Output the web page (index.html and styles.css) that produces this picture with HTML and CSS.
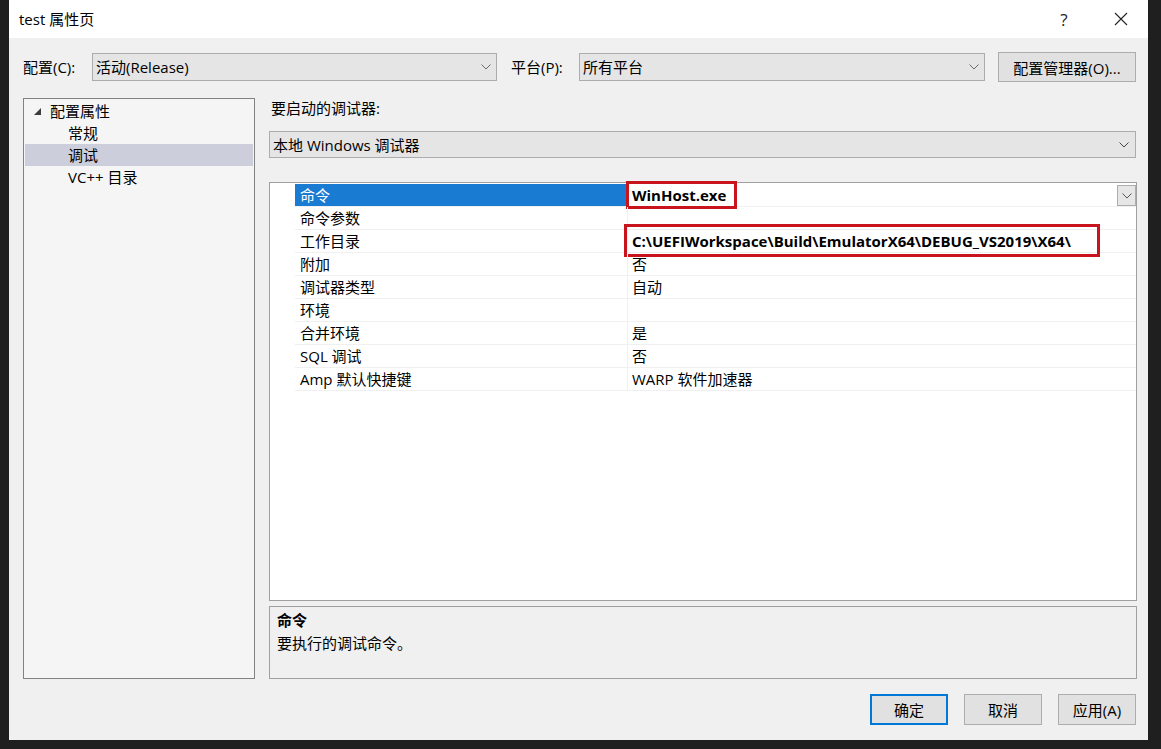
FILE: index.html
```html
<!DOCTYPE html>
<html lang="zh-CN">
<head>
<meta charset="utf-8">
<title>test 属性页</title>
<link rel="stylesheet" href="styles.css">
</head>
<body>
<div class="dialog">
  <div class="titlebar">
    <span class="title">test 属性页</span>
    <div class="tb-buttons">
      <span class="tb-help">?</span>
      <span class="tb-close">
        <svg width="14" height="14" viewBox="0 0 14 14"><path d="M1 1 L13 13 M13 1 L1 13" stroke="#222" stroke-width="1.1" fill="none"/></svg>
      </span>
    </div>
  </div>
  <div class="content">
    <div class="config-row">
      <span class="lbl lbl-config">配置(C):</span>
      <div class="combo combo-config">
        <span class="combo-text">活动(Release)</span>
        <svg class="chev" width="10" height="6" viewBox="0 0 10 6"><polyline points="0.5,0.5 5,5 9.5,0.5" fill="none" stroke="#6a6a6a" stroke-width="1"/></svg>
      </div>
      <span class="lbl lbl-platform">平台(P):</span>
      <div class="combo combo-platform">
        <span class="combo-text">所有平台</span>
        <svg class="chev" width="10" height="6" viewBox="0 0 10 6"><polyline points="0.5,0.5 5,5 9.5,0.5" fill="none" stroke="#6a6a6a" stroke-width="1"/></svg>
      </div>
      <button class="btn btn-manager">配置管理器(O)...</button>
    </div>

    <div class="main">
      <div class="tree">
        <div class="tree-item tree-root">
          <svg class="tri" width="7" height="7" viewBox="0 0 7 7"><polygon points="7,0 7,7 0,7" fill="#3c3c3c"/></svg>
          <span>配置属性</span>
        </div>
        <div class="tree-item tree-child">常规</div>
        <div class="tree-item tree-child selected">调试</div>
        <div class="tree-item tree-child">VC++ 目录</div>
      </div>

      <div class="right">
        <div class="debugger-label">要启动的调试器:</div>
        <div class="combo combo-debugger">
          <span class="combo-text">本地 Windows 调试器</span>
          <svg class="chev" width="10" height="6" viewBox="0 0 10 6"><polyline points="0.5,0.5 5,5 9.5,0.5" fill="none" stroke="#444" stroke-width="1"/></svg>
        </div>

        <div class="grid">
          <div class="row row-selected">
            <div class="gutter"></div>
            <div class="name">命令</div>
            <div class="value">
              <span class="bold">WinHost.exe</span>
              <span class="mark mark-cmd"></span>
              <span class="dd-btn"><svg width="10" height="6" viewBox="0 0 10 6"><polyline points="0.5,0.5 5,5 9.5,0.5" fill="none" stroke="#555" stroke-width="1"/></svg></span>
            </div>
          </div>
          <div class="row">
            <div class="gutter"></div>
            <div class="name">命令参数</div>
            <div class="value"></div>
          </div>
          <div class="row">
            <div class="gutter"></div>
            <div class="name">工作目录</div>
            <div class="value">
              <span class="bold">C:\UEFIWorkspace\Build\EmulatorX64\DEBUG_VS2019\X64\</span>
              <span class="mark mark-dir"></span>
            </div>
          </div>
          <div class="row">
            <div class="gutter"></div>
            <div class="name">附加</div>
            <div class="value">否</div>
          </div>
          <div class="row">
            <div class="gutter"></div>
            <div class="name">调试器类型</div>
            <div class="value">自动</div>
          </div>
          <div class="row">
            <div class="gutter"></div>
            <div class="name">环境</div>
            <div class="value"></div>
          </div>
          <div class="row">
            <div class="gutter"></div>
            <div class="name">合并环境</div>
            <div class="value">是</div>
          </div>
          <div class="row">
            <div class="gutter"></div>
            <div class="name">SQL 调试</div>
            <div class="value">否</div>
          </div>
          <div class="row">
            <div class="gutter"></div>
            <div class="name">Amp 默认快捷键</div>
            <div class="value">WARP 软件加速器</div>
          </div>
        </div>

        <div class="desc">
          <div class="desc-title">命令</div>
          <div class="desc-text">要执行的调试命令。</div>
        </div>
      </div>
    </div>

    <div class="footer">
      <button class="btn btn-footer btn-default">确定</button>
      <button class="btn btn-footer">取消</button>
      <button class="btn btn-footer">应用(A)</button>
    </div>
  </div>
</div>
</body>
</html>
```

FILE: styles.css
```css
* { box-sizing: border-box; }

html, body {
  margin: 0;
  padding: 0;
}

body {
  background: #1f1f1f;
  width: 1161px;
  height: 749px;
  overflow: hidden;
  font-family: "Open Sans", "Noto Sans CJK SC", sans-serif;
  font-size: 15px;
  color: #000;
}

.dialog {
  margin-left: 9px;
  width: 1139px;
  height: 740px;
  background: #f0f0f0;
  display: flex;
  flex-direction: column;
}

.titlebar {
  height: 38px;
  background: #ffffff;
  display: flex;
  align-items: center;
  justify-content: space-between;
  padding-left: 10px;
}

.title {
  font-size: 15px;
  line-height: 20px;
  color: #000;
}

.tb-buttons {
  display: flex;
  align-items: center;
  height: 38px;
}

.tb-help {
  width: 68px;
  text-align: center;
  font-size: 17px;
  color: #222;
}

.tb-close {
  width: 46px;
  height: 38px;
  display: flex;
  align-items: center;
  justify-content: center;
  margin-right: 4px;
}

.content {
  flex: 1;
  display: flex;
  flex-direction: column;
  padding: 14px 11px 15px 14px;
}

.config-row {
  display: flex;
  align-items: center;
  height: 30px;
}

.lbl {
  line-height: 20px;
  white-space: nowrap;
}

.lbl-config { width: 69px; }
.lbl-platform { width: 68px; margin-left: 14px; }

.combo {
  height: 28px;
  background: #e5e5e5;
  border: 1px solid #acacac;
  display: flex;
  align-items: center;
  justify-content: space-between;
  padding: 0 5px 0 3px;
}

.combo-text {
  line-height: 20px;
  white-space: nowrap;
}

.chev { flex: none; }

.combo-config { width: 405px; }
.combo-platform { width: 406px; }

.btn {
  font-family: inherit;
  font-size: 15px;
  color: #000;
  background: #e1e1e1;
  border: 1px solid #adadad;
  padding: 0;
  margin: 0;
}

.btn-manager {
  width: 138px;
  height: 30px;
  margin-left: 13px;
}

.main {
  margin-top: 16px;
  height: 581px;
  display: flex;
  gap: 14px;
}

.tree {
  width: 232px;
  background: #f5f5f5;
  border: 1px solid #828282;
  padding-top: 1px;
}

.tree-item {
  height: 22px;
  line-height: 22px;
  margin: 0 1px;
  display: flex;
  align-items: center;
  white-space: nowrap;
}

.tree-root { padding-left: 9px; }
.tree-root .tri { margin-right: 9px; margin-top: 1px; }
.tree-child { padding-left: 43px; }
.tree-item.selected { background: #cccedb; }

.right {
  width: 868px;
  display: flex;
  flex-direction: column;
}

.debugger-label {
  height: 20px;
  line-height: 20px;
  padding-left: 2px;
}

.combo-debugger {
  margin-top: 13px;
  height: 27px;
  width: 867px;
  padding-right: 6px;
}

.grid {
  margin-top: 24px;
  height: 419px;
  background: #ffffff;
  border: 1px solid #a0a0a0;
  padding-top: 1px;
}

.row {
  display: flex;
  height: 23px;
}

.gutter {
  width: 25px;
  flex: none;
}

.name {
  width: 332px;
  flex: none;
  padding-left: 5px;
  line-height: 22px;
  border-bottom: 1px solid #f0f0f0;
  white-space: nowrap;
}

.value {
  flex: 1;
  position: relative;
  display: flex;
  align-items: center;
  padding-left: 4px;
  border-left: 1px solid #f0f0f0;
  border-bottom: 1px solid #f0f0f0;
  line-height: 22px;
  white-space: nowrap;
}

.row-selected .name {
  background: #1a7bd2;
  color: #ffffff;
}

.bold { font-weight: 700; }

.dd-btn {
  margin-left: auto;
  width: 19px;
  height: 21px;
  background: #e6e6e6;
  border: 1px solid #adadad;
  display: flex;
  align-items: center;
  justify-content: center;
  align-self: flex-start;
  margin-top: 1px;
}

/* red annotation boxes laid over the grid */
.mark {
  position: absolute;
  border: 3px solid #c8151d;
  pointer-events: none;
}

.mark-cmd {
  left: -2px;
  top: -3px;
  width: 111px;
  height: 28px;
}

.mark-dir {
  left: -4px;
  top: -6px;
  width: 476px;
  height: 33px;
}

.desc {
  margin-top: 5px;
  height: 73px;
  border: 1px solid #a0a0a0;
  background: #f0f0f0;
  padding: 2px 7px;
}

.desc-title {
  font-weight: 700;
  line-height: 22px;
}

.desc-text {
  line-height: 22px;
  margin-top: 1px;
}

.footer {
  margin-top: 15px;
  display: flex;
  justify-content: flex-end;
  gap: 16px;
  padding-right: 1px;
}

.btn-footer {
  width: 78px;
  height: 31px;
}

.btn-default {
  border: 2px solid #0078d7;
}
```
